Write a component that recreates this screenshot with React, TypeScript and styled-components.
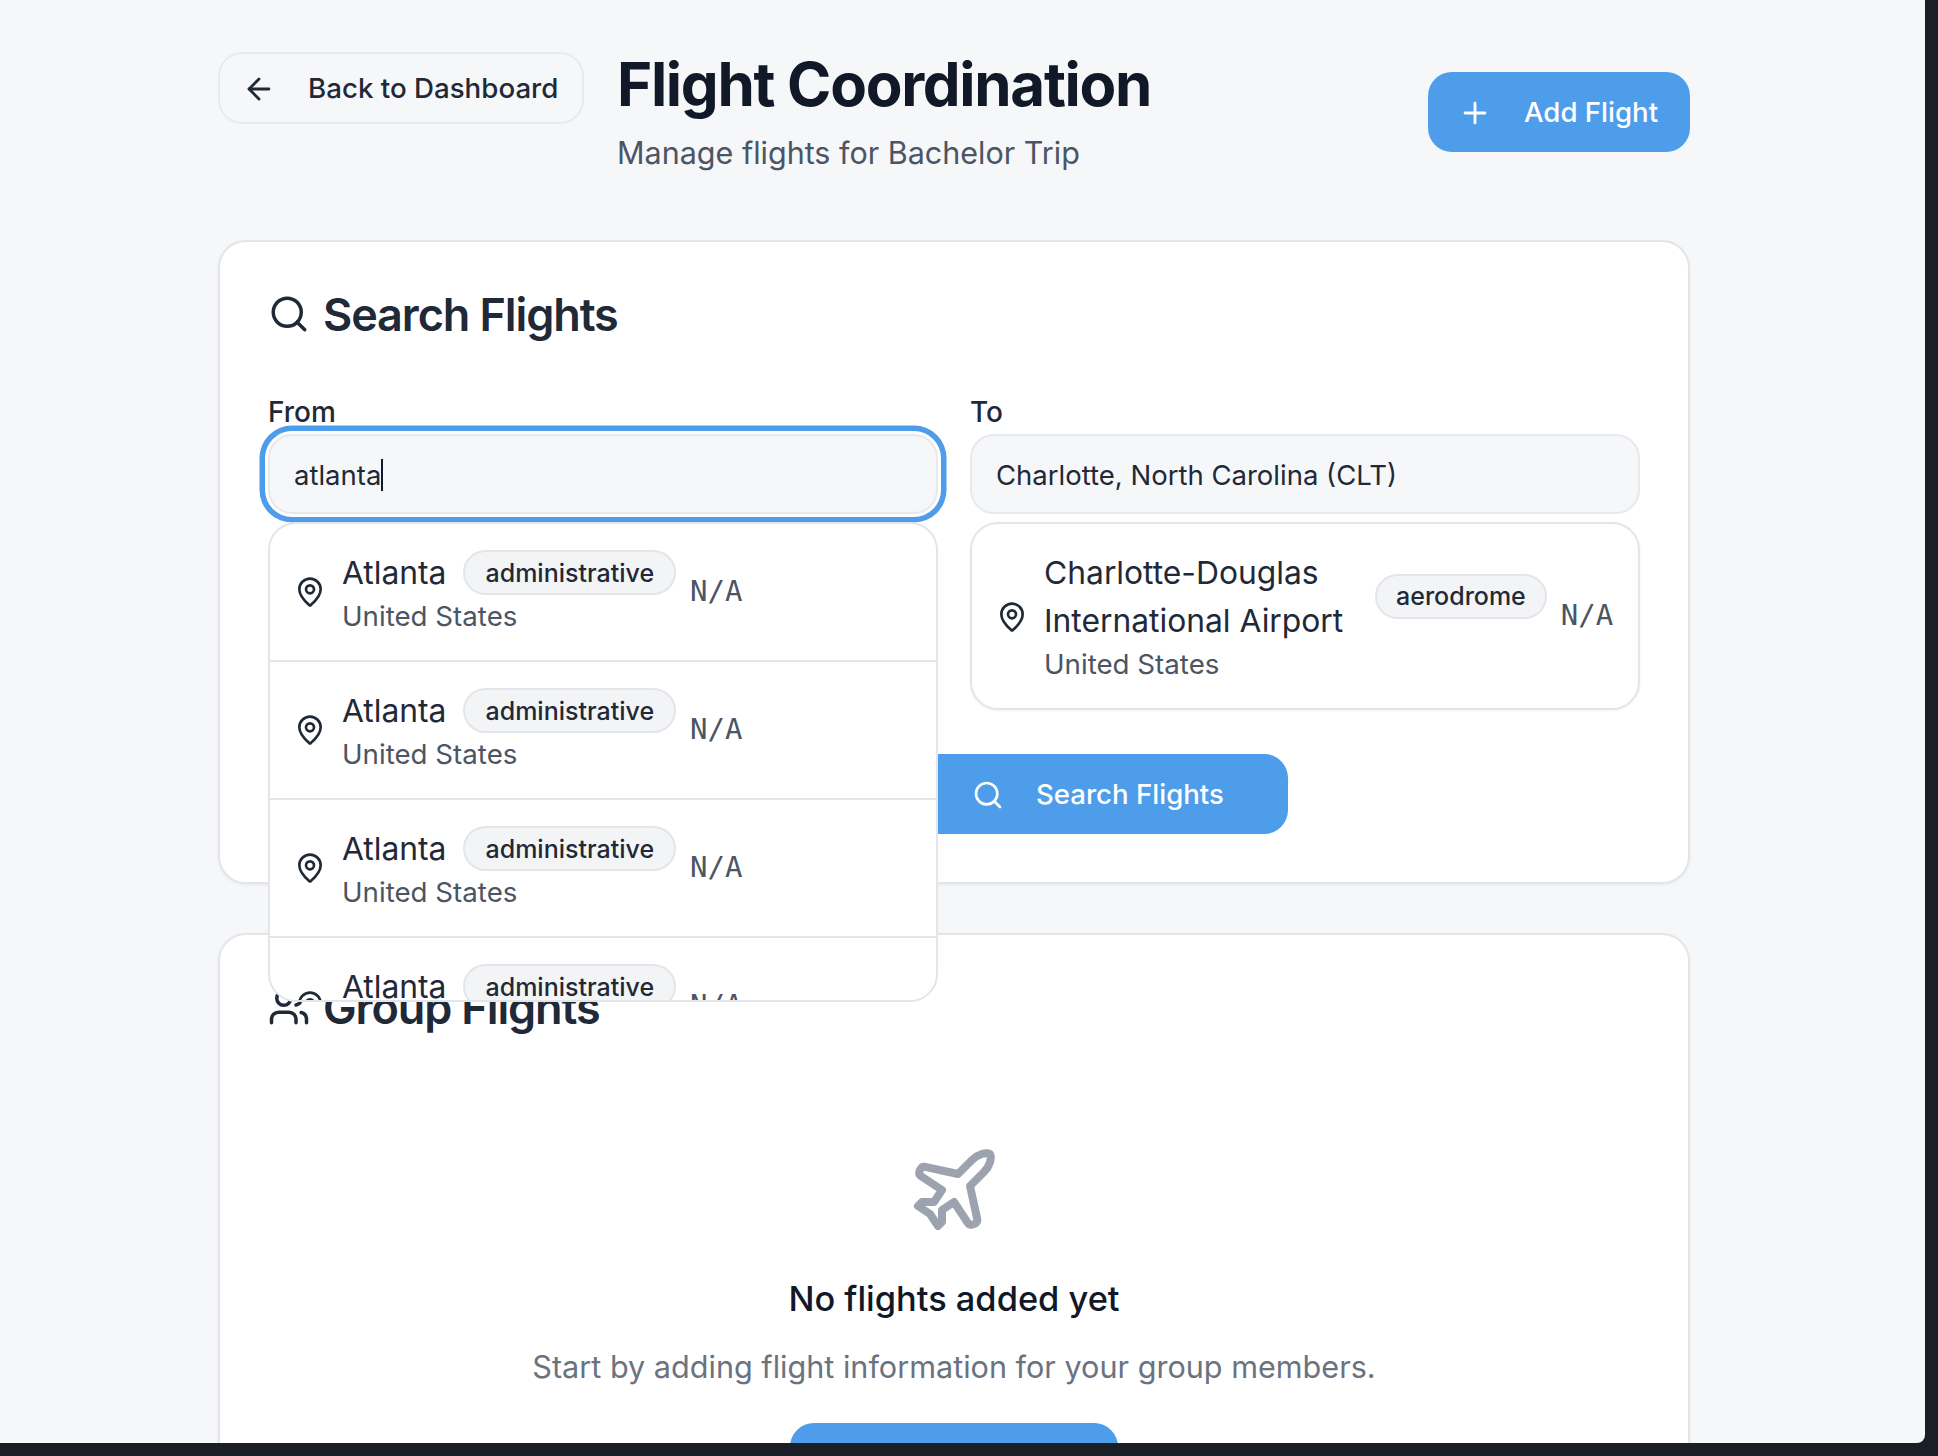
import React from "react";
import styled, { createGlobalStyle } from "styled-components";
import { ArrowLeft, MapPin, Plane, Plus, Search, Users } from "lucide-react";

const Global = createGlobalStyle`
  html, body { margin: 0; padding: 0; background: #1a1e26; }
  * { box-sizing: border-box; }
  body { font-family: Inter, "Liberation Sans", sans-serif; -webkit-font-smoothing: antialiased; }
`;

const Desktop = styled.div`
  width: 1938px;
  height: 1456px;
  background: #1a1e26;
  overflow: hidden;
`;

const Page = styled.main`
  width: 1925px;
  height: 1443px;
  padding: 52px 235px 0 218px;
  background: #f6f7f9;
  border-bottom-right-radius: 8px;
  overflow: hidden;
`;

const Header = styled.header`
  display: flex;
  align-items: center;
  justify-content: space-between;
  height: 119px;
  margin-bottom: 69px;
`;

const HeaderLeft = styled.div`
  display: flex;
  align-self: flex-start;
  align-items: flex-start;
  gap: 33px;
`;

const BackButton = styled.button`
  display: flex;
  align-items: center;
  gap: 32px;
  width: 366px;
  height: 72px;
  padding: 2px 22px 0;
  border: 2px solid #e9eaee;
  border-radius: 24px;
  background: #f6f7f9;
  color: #1f2937;
  font: 500 27.7px/1 Inter, sans-serif;
  white-space: nowrap;
`;

const TitleBlock = styled.div`
  display: flex;
  flex-direction: column;
`;

const Title = styled.h1`
  margin: -2px 0 0;
  color: #111827;
  font-size: 60px;
  font-weight: 700;
  letter-spacing: -1.3px;
  line-height: 68px;
`;

const Subtitle = styled.p`
  margin: 15px 0 0;
  color: #4b5563;
  font-size: 30.5px;
  line-height: 40px;
`;

const PrimaryButton = styled.button<{ $width: number; $left: number }>`
  display: flex;
  flex: none;
  align-items: center;
  gap: 32px;
  width: ${(p) => p.$width}px;
  height: 80px;
  padding: 2px 0 0 ${(p) => p.$left}px;
  border: 0;
  border-radius: 24px;
  background: #4d9deb;
  color: #fff;
  font: 500 27.6px/1 Inter, sans-serif;
  white-space: nowrap;
`;

const Card = styled.section<{ $height?: number }>`
  position: relative;
  ${(p) => (p.$height ? `height: ${p.$height}px;` : "")}
  padding: 48px;
  border: 2px solid #e3e5e9;
  border-radius: 28px;
  background: #fff;
  box-shadow: 0 1px 3px rgba(17, 24, 39, 0.06);
  & + & {
    margin-top: 49px;
  }
`;

const CardTitle = styled.h2`
  display: flex;
  align-items: center;
  gap: 13px;
  height: 52px;
  margin: -2px 0 57px;
  color: #1f2937;
  font-size: 45px;
  font-weight: 600;
  letter-spacing: -1.1px;
  svg { flex: none; }
`;

const FieldGrid = styled.div`
  display: grid;
  grid-template-columns: minmax(0, 1fr) minmax(0, 1fr);
  gap: 32px;
  align-items: start;
`;

const Field = styled.div`
  position: relative;
  display: flex;
  flex-direction: column;
`;

const Label = styled.label`
  height: 37px;
  color: #1f2937;
  font-size: 28px;
  font-weight: 500;
  line-height: 30px;
`;

const InputBox = styled.div<{ $focused?: boolean }>`
  display: flex;
  align-items: center;
  height: 80px;
  padding: 2px 24px 0;
  border: 2px solid #e8e9ed;
  border-radius: 24px;
  background: #f6f7f9;
  color: #1f2937;
  font-size: 27.5px;
  ${(p) => (p.$focused ? "box-shadow: 0 0 0 3px #fff, 0 0 0 8.5px #4d9deb;" : "")}
`;

const Caret = styled.span`
  width: 2px;
  height: 32px;
  background: #111827;
`;

const Dropdown = styled.div`
  position: absolute;
  z-index: 5;
  top: 125px;
  left: 0;
  right: 0;
  height: 480px;
  overflow: hidden;
  border: 2px solid #e3e5e9;
  border-radius: 28px;
  background: #fff;
`;

const Selected = styled.div`
  display: flex;
  align-items: center;
  gap: 16px;
  height: 188px;
  margin-top: 8px;
  padding: 0 24px;
  border: 2px solid #e3e5e9;
  border-radius: 28px;
  background: #fff;
  box-shadow: 0 1px 3px rgba(17, 24, 39, 0.05);
`;

const Option = styled.div`
  display: flex;
  align-items: center;
  gap: 16px;
  height: 138px;
  padding: 0 24px 1px;
  border-bottom: 2px solid #e3e5e9;
`;

const PinIcon = styled(MapPin)`
  flex: none;
  margin-top: 1px;
  color: #1f2937;
`;

const PlaceText = styled.div<{ $wide?: boolean }>`
  display: flex;
  flex-direction: column;
  ${(p) => (p.$wide ? "width: 315px; flex: none;" : "")}
`;

const NameRow = styled.div`
  display: flex;
  align-items: center;
  gap: 17px;
`;

const Name = styled.div`
  color: #1f2937;
  font-size: 31.8px;
  font-weight: 400;
  line-height: 48px;
`;

const Country = styled.div`
  color: #4b5563;
  font-size: 27.7px;
  line-height: 38px;
`;

const Tag = styled.span`
  display: inline-flex;
  align-items: center;
  height: 45px;
  padding: 0 20px;
  border: 2px solid #e3e5e9;
  border-radius: 23px;
  background: #f3f4f6;
  color: #1f2937;
  font-size: 25px;
  font-weight: 500;
`;

const Code = styled.span`
  margin: -2px 0 0 -2px;
  color: #4b5563;
  font-family: "DejaVu Sans Mono", "Liberation Mono", monospace;
  font-size: 29px;
`;

const SelectedTag = styled(Tag)`
  margin-top: -40px;
  padding: 0 19px;
`;

const ActionRow = styled.div`
  display: flex;
  margin-top: 44px;
  padding-left: 640px;
`;

const EmptyState = styled.div`
  display: flex;
  flex-direction: column;
  align-items: center;
  padding-top: 52px;
  color: #9ca3af;
`;

const EmptyTitle = styled.h3`
  margin: 39px 0 0;
  color: #111827;
  font-size: 34.4px;
  font-weight: 500;
  line-height: 44px;
`;

const EmptyText = styled.p`
  margin: 26px 0 0;
  color: #6b7280;
  font-size: 30.6px;
  line-height: 40px;
`;

const EmptyButton = styled(PrimaryButton)`
  margin-top: 36px;
`;

const options = [0, 1, 2, 3];

export default function App() {
  return (
    <Desktop>
      <Global />
      <Page>
        <Header>
          <HeaderLeft>
            <BackButton>
              <ArrowLeft size={34} strokeWidth={2} />
              Back to Dashboard
            </BackButton>
            <TitleBlock>
              <Title>Flight Coordination</Title>
              <Subtitle>Manage flights for Bachelor Trip</Subtitle>
            </TitleBlock>
          </HeaderLeft>
          <PrimaryButton $width={262} $left={30}>
            <Plus size={34} />
            Add Flight
          </PrimaryButton>
        </Header>

        <Card>
          <CardTitle>
            <Search size={42} strokeWidth={2} />
            Search Flights
          </CardTitle>
          <FieldGrid>
            <Field>
              <Label>From</Label>
              <InputBox $focused>
                atlanta
                <Caret />
              </InputBox>
              <Dropdown>
                {options.map((i) => (
                  <Option key={i}>
                    <PinIcon size={32} />
                    <PlaceText>
                      <NameRow>
                        <Name>Atlanta</Name>
                        <Tag>administrative</Tag>
                      </NameRow>
                      <Country>United States</Country>
                    </PlaceText>
                    <Code>N/A</Code>
                  </Option>
                ))}
              </Dropdown>
            </Field>
            <Field>
              <Label>To</Label>
              <InputBox>Charlotte, North Carolina (CLT)</InputBox>
              <Selected>
                <PinIcon size={32} />
                <PlaceText $wide>
                  <Name>Charlotte-Douglas International Airport</Name>
                  <Country>United States</Country>
                </PlaceText>
                <SelectedTag>aerodrome</SelectedTag>
                <Code>N/A</Code>
              </Selected>
            </Field>
          </FieldGrid>
          <ActionRow>
            <PrimaryButton $width={380} $left={64}>
              <Search size={32} />
              Search Flights
            </PrimaryButton>
          </ActionRow>
        </Card>

        <Card $height={600}>
          <CardTitle>
            <Users size={42} strokeWidth={2} />
            Group Flights
          </CardTitle>
          <EmptyState>
            <Plane size={96} strokeWidth={2} />
            <EmptyTitle>No flights added yet</EmptyTitle>
            <EmptyText>Start by adding flight information for your group members.</EmptyText>
            <EmptyButton $width={328} $left={40} />
          </EmptyState>
        </Card>
      </Page>
    </Desktop>
  );
}
